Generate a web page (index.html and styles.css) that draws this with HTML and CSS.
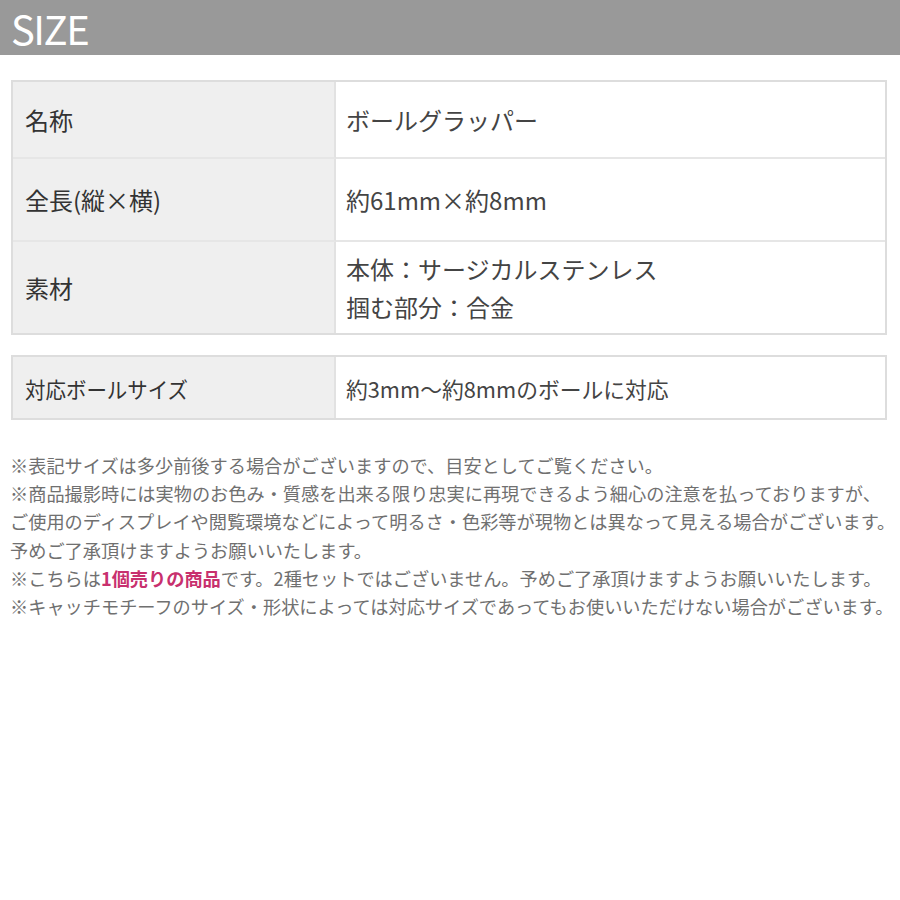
FILE: index.html
```html
<!DOCTYPE html>
<html lang="ja">
<head>
<meta charset="utf-8">
<title>SIZE</title>
<link rel="stylesheet" href="styles.css">
</head>
<body>
<header class="head"><h1 class="head-title">SIZE</h1></header>
<main class="content">
  <div class="spec">
    <div class="cell label r1">名称</div>
    <div class="cell value r1">ボールグラッパー</div>
    <div class="cell label r2">全長(縦×横)</div>
    <div class="cell value r2">約61mm×約8mm</div>
    <div class="cell label r3 last">素材</div>
    <div class="cell value r3 last">本体：サージカルステンレス<br>掴む部分：合金</div>
  </div>
  <div class="spec spec2">
    <div class="cell label r4 last"><span class="cond">対応ボールサイズ</span></div>
    <div class="cell value r4 last"><span class="cond cond-v">約3mm〜約8mmのボールに対応</span></div>
  </div>
  <div class="notes">
    <p>※表記サイズは多少前後する場合がございますので、目安としてご覧ください。</p>
    <p>※商品撮影時には実物のお色み・質感を出来る限り忠実に再現できるよう細心の注意を払っておりますが、</p>
    <p>ご使用のディスプレイや閲覧環境などによって明るさ・色彩等が現物とは異なって見える場合がございます。</p>
    <p>予めご了承頂けますようお願いいたします。</p>
    <p>※こちらは<strong class="hl">1個売りの商品</strong>です。2種セットではございません。予めご了承頂けますようお願いいたします。</p>
    <p>※キャッチモチーフのサイズ・形状によっては対応サイズであってもお使いいただけない場合がございます。</p>
  </div>
</main>
</body>
</html>
```
FILE: styles.css
```css
* { box-sizing: border-box; }
html, body { margin: 0; padding: 0; background: #fff; }
body {
  font-family: "Noto Sans CJK JP", "Noto Sans", sans-serif;
  color: #333;
}
.head {
  height: 55px;
  background: #999;
  display: flex;
  align-items: center;
  padding-left: 11px;
}
.head-title {
  margin: 0;
  font-family: "Noto Sans CJK JP", "Open Sans", sans-serif;
  font-weight: 400;
  font-size: 40px;
  line-height: 48px;
  color: #fff;
  letter-spacing: -1.5px;
  padding-right: 4px;
}
.content {
  padding: 25px 13px 0 11px;
}
.spec {
  display: grid;
  grid-template-columns: 323px 1fr;
  border: 2px solid #ddd;
  background: #fff;
}
.spec2 { margin-top: 20px; }
.cell {
  display: flex;
  align-items: center;
  font-size: 24px;
  line-height: 38px;
  border-bottom: 2px solid #e6e6e6;
}
.cell.last { border-bottom: none; }
.label {
  background: #efefef;
  padding-left: 12px;
  border-right: 2px solid #e2e2e2;
  color: #333;
}
.value {
  padding-left: 10px;
  color: #444;
}
.r1 { height: 77px; }
.r2 { height: 83px; }
.r3 { height: 91px; }
.r4 { height: 61px; font-size: 22px; }
.cond {
  display: inline-block;
  transform: scaleX(0.93);
  transform-origin: left center;
  white-space: nowrap;
}
.cond-v { transform: scaleX(0.99); }
.notes {
  margin-top: 31px;
  margin-left: -1px;
  font-size: 18.2px;
  line-height: 28.2px;
  color: #707070;
}
.notes p { margin: 0; white-space: nowrap; }
.hl { color: #c8306e; font-weight: 700; }
```
